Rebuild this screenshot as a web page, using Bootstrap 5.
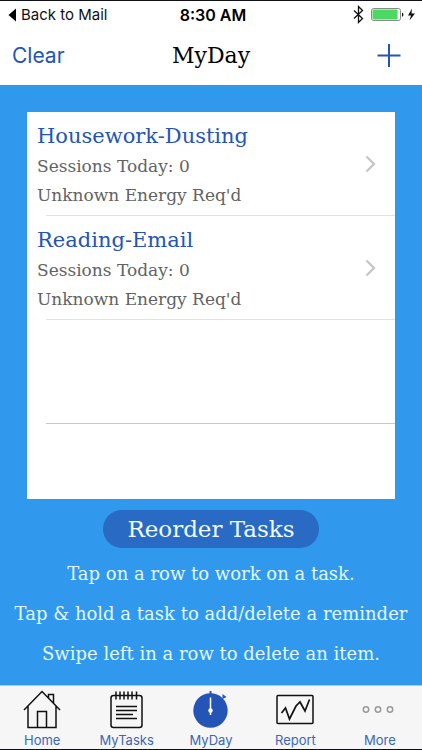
<!DOCTYPE html>
<html lang="en">
<head>
<meta charset="utf-8">
<meta name="viewport" content="width=device-width, initial-scale=1">
<title>MyDay</title>
<link href="https://cdn.jsdelivr.net/npm/bootstrap@5.3.0/dist/css/bootstrap.min.css" rel="stylesheet">
<style>
  body { font-family: Inter, "Liberation Sans", sans-serif; background: #3099ed; color: #000; }
  .typewriter { font-family: "DejaVu Serif", serif; }
  .screen { min-height: 100vh; border-top: 1px solid #101018; border-bottom: 1px solid #101018; }
  .status-bar { height: 24px; font-size: 15px; line-height: 20px; }
  .status-bar a { color: #111; }
  .status-time { font-size: 16px; font-weight: 600; }
  .side { flex: 1 1 0; }
  .title-bar { height: 60px; padding-top: 2px; }
  .title-bar .btn { color: #2454b5; font-size: 21px; line-height: 28px; }
  .title-bar h1 { font-size: 22px; line-height: 28px; }
  .day-list { margin: 27px 27px 0; min-height: 387px; background: #fff; }
  .task { height: 104px; padding: 9px 17px 0 10px; }
  .task-name { color: #2454b5; font-size: 21px; line-height: 31px; }
  .task-info { color: #636363; font-size: 17px; line-height: 29px; }
  .task svg { margin-top: 29px; }
  .rule { height: 1px; margin: -1px 0 0 19px; background: #e2e2e4; }
  .rule-last { background: #c8c8cc; }
  .reorder { height: 38px; margin-top: 11px; padding: 0 24px; background: #286ac4; color: #f0fbff; font-size: 23px; line-height: 36px; }
  .reorder:hover { background: #245fb0; color: #fff; }
  .hints { padding-top: 6px; color: #e2f7ff; font-size: 18px; line-height: 40px; }
  .tab-bar { height: 64px; background: #f6f6f6; border-top: 1px solid #b5c6d6; }
  .tab-bar a { color: #3c66b8; font-size: 13px; line-height: 16px; padding-top: 4px; }
  .tab-bar svg { height: 42px; }
</style>
<script src="https://cdn.jsdelivr.net/npm/bootstrap@5.3.0/dist/js/bootstrap.bundle.min.js"></script>
</head>
<body>
<div class="screen d-flex flex-column">
  <header class="bg-white">
    <div class="status-bar d-flex align-items-end ps-2 pe-1">
      <div class="side"><a href="#" class="text-decoration-none d-flex align-items-center text-nowrap"><svg class="me-1" width="9" height="14" viewBox="0 0 9 14" aria-hidden="true"><path d="M0.5 7 8 0.5v13z"/></svg>Back to Mail</a></div>
      <div class="status-time">8:30 AM</div>
      <div class="side d-flex justify-content-end">
        <svg width="66" height="20" viewBox="0 0 66 20" role="img" aria-label="Bluetooth on, battery charging">
          <path d="M2 5.500 10.500 13.500 6.500 17.500V1.500L10.500 5.500 2 13.500" fill="none" stroke="#111" stroke-width="1.300"/>
          <rect x="19.500" y="3.500" width="29" height="12" rx="2" fill="#fff" stroke="#8a8a8a"/>
          <rect x="20.500" y="4.500" width="25" height="10" rx="1" fill="#4bd863"/>
          <path d="M50 7.500q3 2 0 4.500z" fill="#111"/>
          <path d="M60 3.500 56 10.500h3l-1.500 5 5.500-7h-3.500z" fill="#111"/>
        </svg>
      </div>
    </div>
    <div class="title-bar d-flex align-items-center px-2">
      <div class="side"><button type="button" class="btn border-0 p-1">Clear</button></div>
      <h1 class="typewriter fw-normal mb-0">MyDay</h1>
      <div class="side d-flex justify-content-end"><button type="button" class="btn border-0 p-0 d-flex pe-2 me-1" aria-label="Add task"><svg width="26" height="26" viewBox="0 0 26 26" aria-hidden="true"><path d="M13 1v23M1.500 12.500h23" stroke="#2454b5" stroke-width="2" fill="none"/></svg></button></div>
    </div>
  </header>
  <main class="flex-grow-1 typewriter">
    <div class="day-list">
      <a href="#" class="task d-flex text-decoration-none">
        <div class="flex-grow-1"><div class="task-name">Housework-Dusting</div><div class="task-info">Sessions Today: 0</div><div class="task-info">Unknown Energy Req'd</div></div>
        <svg width="14" height="28" viewBox="0 0 14 28" aria-hidden="true"><path d="M2.500 6.500 10 14 2.500 21.500" fill="none" stroke="#c4c4c9" stroke-width="2.200"/></svg>
      </a>
      <div class="rule"></div>
      <a href="#" class="task d-flex text-decoration-none">
        <div class="flex-grow-1"><div class="task-name">Reading-Email</div><div class="task-info">Sessions Today: 0</div><div class="task-info">Unknown Energy Req'd</div></div>
        <svg width="14" height="28" viewBox="0 0 14 28" aria-hidden="true"><path d="M2.500 6.500 10 14 2.500 21.500" fill="none" stroke="#c4c4c9" stroke-width="2.200"/></svg>
      </a>
      <div class="rule"></div>
      <div class="task"></div>
      <div class="rule rule-last"></div>
    </div>
    <div class="text-center"><button type="button" class="btn reorder rounded-pill border-0">Reorder Tasks</button></div>
    <div class="hints text-center">
      <p class="mb-0">Tap on a row to work on a task.</p>
      <p class="mb-0">Tap &amp; hold a task to add/delete a reminder</p>
      <p class="mb-0">Swipe left in a row to delete an item.</p>
    </div>
  </main>
  <nav class="tab-bar d-flex" aria-label="Main">
    <a href="#" class="side d-flex flex-column align-items-center text-decoration-none">
      <svg width="42" viewBox="0 0 42 42" fill="none" stroke="#111" stroke-width="1.500" aria-hidden="true"><path d="M3 20 21 1.500 39 20M7 16v21.500h28V16M16.500 37.500v-16h9v16M27.500 8V4.500h5V13"/></svg>Home</a>
    <a href="#" class="side d-flex flex-column align-items-center text-decoration-none">
      <svg width="42" viewBox="0 0 42 42" fill="none" stroke="#111" stroke-width="1.500" aria-hidden="true"><rect x="5" y="5.500" width="31" height="32" rx="2.500"/><path d="M10 1.500v8M14 1.500v8M18 1.500v8M22 1.500v8M26 1.500v8M30.500 1.500v8M10 16.500h21M10 20.500h21M10 24.500h17M10 28.500h21"/></svg>MyTasks</a>
    <a href="#" class="side d-flex flex-column align-items-center text-decoration-none" aria-current="page">
      <svg width="42" viewBox="0 0 42 42" aria-hidden="true"><circle cx="20.500" cy="20.500" r="17.200" fill="#2454b5"/><path d="M19.500 1h2v4h-2zM32.500 4l4 3-4 2z" fill="#2454b5"/><path d="M20.500 7.500v17.500" stroke="#fff" stroke-width="1.500"/><circle cx="20.500" cy="20.500" r="2.200" fill="#fff"/></svg>MyDay</a>
    <a href="#" class="side d-flex flex-column align-items-center text-decoration-none">
      <svg width="42" viewBox="0 0 42 42" fill="none" stroke="#111" aria-hidden="true"><rect x="3" y="5.500" width="36" height="28" rx="1" stroke-width="1.500"/><path d="M7.500 23 11.500 18 15.500 29 22 16 26 12 31 21 35.500 9.500" stroke-width="1.700"/></svg>Report</a>
    <a href="#" class="side d-flex flex-column align-items-center text-decoration-none">
      <svg width="42" viewBox="0 0 42 42" fill="none" stroke="#999" stroke-width="1.500" aria-hidden="true"><circle cx="7" cy="19.500" r="2.700"/><circle cx="19" cy="19.500" r="2.700"/><circle cx="31" cy="19.500" r="2.700"/></svg>More</a>
  </nav>
</div>
</body>
</html>
